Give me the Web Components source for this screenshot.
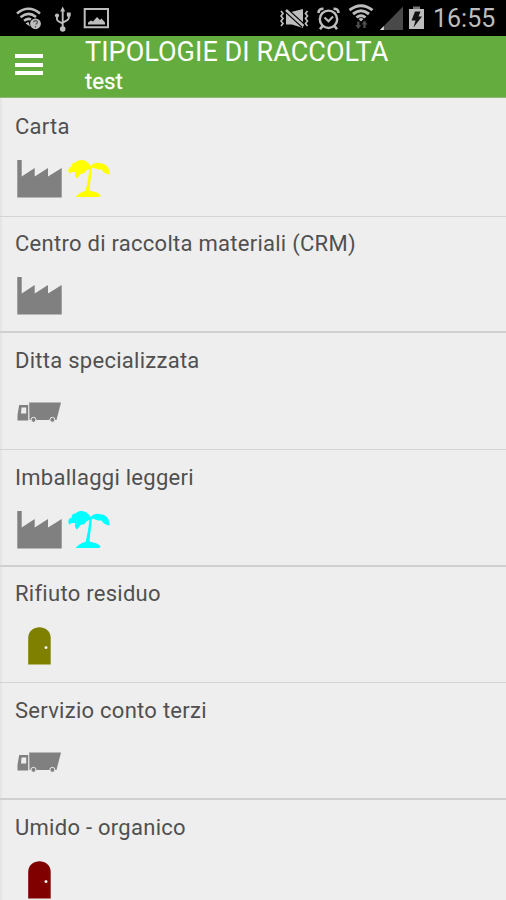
<!DOCTYPE html>
<html lang="it">
<head>
<meta charset="utf-8">
<title>Tipologie di raccolta</title>
<style>
  body {
    margin: 0;
    height: 900px;
    overflow: hidden;
    background: #eee;
    font-family: Roboto, "Liberation Sans", sans-serif;
  }
</style>
</head>
<body>
<phone-status time="16:55"></phone-status>
<app-header>
  TIPOLOGIE DI RACCOLTA
  <span slot="subtitle">test</span>
</app-header>
<waste-list>
  <waste-item>Carta
    <waste-icon slot="icons" name="factory"></waste-icon>
    <waste-icon slot="icons" name="palm" style="color: #ff0"></waste-icon>
  </waste-item>
  <waste-item>Centro di raccolta materiali (CRM)
    <waste-icon slot="icons" name="factory"></waste-icon>
  </waste-item>
  <waste-item>Ditta specializzata
    <waste-icon slot="icons" name="truck"></waste-icon>
  </waste-item>
  <waste-item>Imballaggi leggeri
    <waste-icon slot="icons" name="factory"></waste-icon>
    <waste-icon slot="icons" name="palm" style="color: #0ff"></waste-icon>
  </waste-item>
  <waste-item>Rifiuto residuo
    <waste-icon slot="icons" name="door" style="color: #808000"></waste-icon>
  </waste-item>
  <waste-item>Servizio conto terzi
    <waste-icon slot="icons" name="truck"></waste-icon>
  </waste-item>
  <waste-item>Umido - organico
    <waste-icon slot="icons" name="door" style="color: #800000"></waste-icon>
  </waste-item>
</waste-list>

<script>
const templateStatus = document.createElement("template");
templateStatus.innerHTML = `
  <style>
  :host {
    display: flex;
    justify-content: space-between;
    height: 36px;
    background: #000;
    color: #bdbdbd;
  }
  svg {
    display: block;
    flex: none;
  }
  .right {
    display: flex;
  }
  time {
    width: 73px;
    font-size: 25px;
    line-height: 37px;
    white-space: nowrap;
  }
  </style>
  <svg width="120" height="36" viewBox="0 0 120 36" fill="none" stroke="currentColor">
    <g stroke-width="2.5">
      <path d="M17 13.500Q28.500 4 40 13.500"/>
      <path d="M20.500 17.200Q28.500 10.700 36 17"/>
      <path d="M24 20.800Q28 17.800 31 19.500"/>
    </g>
    <path d="M25.500 23.500L28.500 21.800 30 26.500Z" fill="currentColor" stroke="none"/>
    <circle cx="35.500" cy="23.800" r="5.400" fill="currentColor" stroke="none"/>
    <path d="M33.600 22.300Q33.700 20.600 35.600 20.600 37.500 20.700 37.400 22.400 37.200 23.500 35.600 24.500M35.500 26V27.500" stroke="#555" stroke-width="1.300"/>
    <path d="M62.700 9V29M57 15.500V19.500Q57 21 62.700 23.500M68.800 14.500V18Q68.800 20 62.700 22.500" stroke-width="1.900"/>
    <path d="M60.200 11.500L62.700 6.500 65.200 11.500Z" fill="currentColor" stroke="none"/>
    <circle cx="57" cy="15.500" r="2.100" fill="currentColor" stroke="none"/>
    <path d="M66.900 12.500H70.700V16.500H66.900Z" fill="currentColor" stroke="none"/>
    <circle cx="62.700" cy="29" r="2.800" fill="currentColor" stroke="none"/>
    <path d="M84.700 9H108V27.300H84.700Z" stroke-width="2"/>
    <path d="M88 24.500V22.500L91 20.500 93 21.500 97 17 100 20 101.500 18.500 105 22.500V24.500Z" fill="currentColor" stroke="none"/>
  </svg>
  <div class="right">
    <svg width="153" height="36" viewBox="280 0 153 36" fill="none" stroke="currentColor">
      <!-- muted speaker with vibration -->
      <path d="M286 12H291L303 9V28L292 24.500H286Z" fill="currentColor" stroke="none"/>
      <path d="M286 10L303.500 26" stroke="#000" stroke-width="5"/>
      <path d="M286 10L303.500 26" stroke-width="2.500"/>
      <path d="M281 11L283 13.500 281 16 283 18.500 281 21 283 23.500 281 26M307.500 11L305.500 13.500 307.500 16 305.500 18.500 307.500 21 305.500 23.500 307.500 26" stroke-width="1.700"/>
      <!-- alarm clock -->
      <circle cx="328.500" cy="19.300" r="8.700" stroke-width="2.400"/>
      <path d="M318.500 13Q318.500 8.500 323.500 8.700M333.500 8.700Q338.500 8.500 338.500 13M322.500 26L320 29.300M334.500 26L337 29.300" stroke-width="2.600"/>
      <path d="M324.500 17.500L328.500 21.300 333 16.500" stroke-width="2"/>
      <!-- wifi -->
      <path d="M349.500 10.200Q361 1.500 372.500 10.200M353 14Q361 7.500 369 14M356.500 17.500Q361 13.800 365.500 17.500" stroke-width="2.900"/>
      <path d="M358.500 19Q361 17 363.500 19L361 21.500Z" fill="currentColor" stroke="none"/>
      <path d="M358.300 21.500V27M364.500 21.500V28" stroke="#4c4c4c" stroke-width="2.400"/>
      <path d="M355.300 25H361.300L358.300 29ZM361.500 24.500L364.500 20.500 367.500 24.500Z" fill="#4c4c4c" stroke="none"/>
      <!-- signal -->
      <path d="M380 30L403 6.500V30Z" fill="#494949" stroke="none"/>
      <path d="M380 30L383.800 26V30Z" fill="#ddd" stroke="none"/>
      <!-- battery -->
      <path d="M413 6.500H420V9H413Z" fill="#777" stroke="none"/>
      <path d="M409 9H424V29H409Z" fill="currentColor" stroke="none"/>
      <path d="M415 11.500H420.500L418.500 16.500H422L413.500 27.500 415.500 20.500H411.500Z" fill="#111" stroke="none"/>
    </svg>
    <time></time>
  </div>
`;

class PhoneStatus extends HTMLElement {
  constructor() {
    super();
    const shadow = this.attachShadow({ mode: "open" });
    shadow.appendChild(templateStatus.content.cloneNode(true));
    shadow.querySelector("time").textContent = this.getAttribute("time");
  }
}

const templateHeader = document.createElement("template");
templateHeader.innerHTML = `
  <style>
  :host {
    display: flex;
    box-sizing: border-box;
    height: 62px;
    background: #63ac3d;
    border-bottom: 1px solid #8fb878;
    color: #fff;
  }
  .menu {
    display: flex;
    flex-direction: column;
    gap: 4.500px;
    width: 28px;
    padding: 18px 42px 0 15px;
  }
  .menu i {
    height: 4px;
    background: #fff;
  }
  h1 {
    margin: 0;
    font-size: 27px;
    font-weight: 400;
    line-height: 32px;
    letter-spacing: .05px;
    white-space: nowrap;
  }
  p {
    margin: 0;
    font-size: 22.200px;
    font-weight: 400;
    line-height: 26px;
    -webkit-text-stroke: .3px #fff;
  }
  </style>
  <div class="menu"><i></i><i></i><i></i></div>
  <div>
    <h1><slot></slot></h1>
    <p><slot name="subtitle"></slot></p>
  </div>
`;

class AppHeader extends HTMLElement {
  constructor() {
    super();
    const shadow = this.attachShadow({ mode: "open" });
    shadow.appendChild(templateHeader.content.cloneNode(true));
  }
}

const templateList = document.createElement("template");
templateList.innerHTML = `
  <style>
  :host {
    display: block;
    box-sizing: border-box;
    height: 802px;
    padding-top: 1.900px;
    overflow: hidden;
    background: linear-gradient(90deg, #e2e2e2, #eee 3px);
  }
  ::slotted(:nth-child(even)) {
    --divider: 2px solid #d0d0d0;
  }
  </style>
  <slot></slot>
`;

class WasteList extends HTMLElement {
  constructor() {
    super();
    const shadow = this.attachShadow({ mode: "open" });
    shadow.appendChild(templateList.content.cloneNode(true));
  }
}

const templateItem = document.createElement("template");
templateItem.innerHTML = `
  <style>
  :host {
    display: block;
    box-sizing: border-box;
    height: 116.720px;
    padding: 12.500px 15px 0;
    border-bottom: var(--divider, 1px solid #d3d3d3);
    color: #505050;
  }
  .name {
    height: 48px;
    font-size: 22px;
    line-height: 29px;
    letter-spacing: .270px;
    white-space: nowrap;
  }
  .icons {
    display: flex;
  }
  </style>
  <div class="name"><slot></slot></div>
  <div class="icons"><slot name="icons"></slot></div>
`;

class WasteItem extends HTMLElement {
  constructor() {
    super();
    const shadow = this.attachShadow({ mode: "open" });
    shadow.appendChild(templateItem.content.cloneNode(true));
  }
}

const icons = {
  factory: `<path d="M2.300 0H6.700V16.500L19.700 8V16.500L33 8V16.500L46.700 8V37.500H2.300Z"/>`,
  palm: `
    <path d="M25 7.500C23 10.500 21.500 9.500 19.500 13L15.500 14 12 18.500C9.500 16 9.500 14.500 10.500 12.500 8 11.500 5.500 12 4.300 14 2 9 4 7 7 6.500 6 4.500 8 2.500 10.500 2.500 14-1.500 22-1 25.500 6 29 2.500 33 2 36.500 3.500 42 4 45 9 44.500 14.500 41.500 14 38 12.500 36.500 9.500 33 10 30 8.500 28 7.500L26.800 8.500C26 17 25 24 24.500 30.500L28 31.500Q33 32 35.500 35.500 35.500 37 31 37H12Q9.500 36.500 12 35.500 16 31.500 20.500 31 23 22 24.500 7.800Z"/>
  `,
  truck: `
    <path d="M14.200 8.500H46L41.500 26H14.500Z"/>
    <path fill-rule="evenodd" d="M4.200 11H13.200V26.500H2.500V21ZM6.500 13.500L6 19.500H11.200V13.500Z"/>
    <g stroke="#eee">
      <circle cx="18.500" cy="25.800" r="2.500"/>
      <circle cx="37.400" cy="25.800" r="2.500"/>
    </g>
  `,
  door: `
    <path d="M13.200 37.500V11C13.200-3.500 35.700-3.500 35.700 11V37.500Z"/>
    <circle cx="31" cy="20.500" r="1.500" fill="#eee"/>
  `
};

class WasteIcon extends HTMLElement {
  constructor() {
    super();
    const shadow = this.attachShadow({ mode: "open" });
    shadow.innerHTML = `
      <style>
      :host {
        display: block;
        width: 50px;
        height: 38px;
        color: #808080;
      }
      svg {
        display: block;
      }
      </style>
      <svg width="50" height="38" viewBox="0 0 50 38" fill="currentColor">${icons[this.getAttribute("name")]}</svg>
    `;
  }
}

customElements.define("phone-status", PhoneStatus);
customElements.define("app-header", AppHeader);
customElements.define("waste-list", WasteList);
customElements.define("waste-item", WasteItem);
customElements.define("waste-icon", WasteIcon);
</script>
</body>
</html>
